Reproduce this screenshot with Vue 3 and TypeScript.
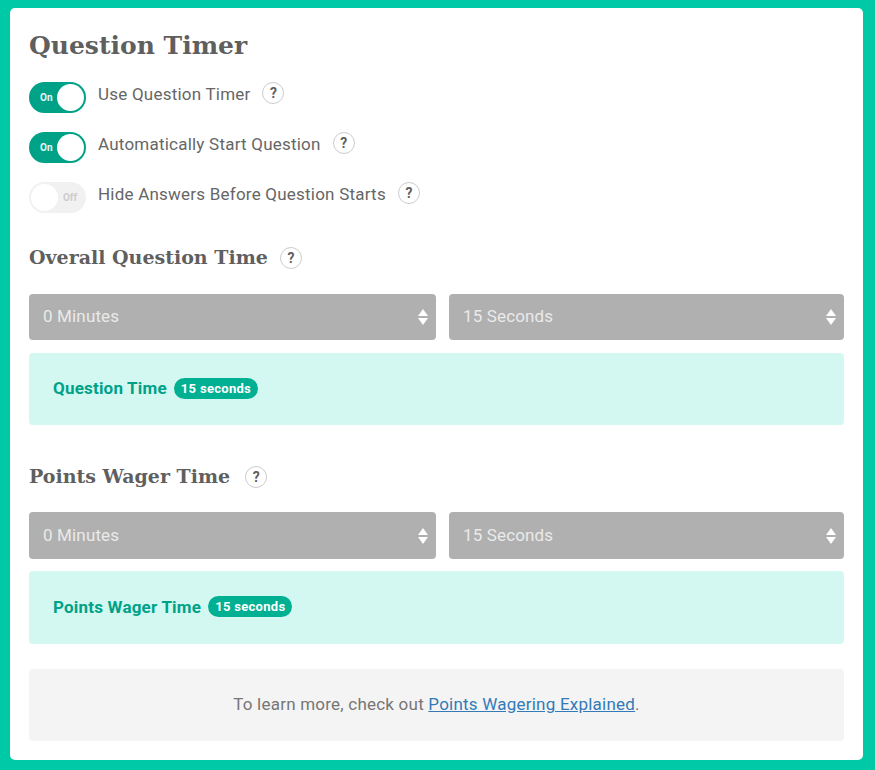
<script setup lang="ts">
import { ref } from 'vue';

const toggles = ref([
  { label: 'Use Question Timer', on: true },
  { label: 'Automatically Start Question', on: true },
  { label: 'Hide Answers Before Question Starts', on: false },
]);

const sections = [
  { title: 'Overall Question Time', label: 'Question Time' },
  { title: 'Points Wager Time', label: 'Points Wager Time' },
];
</script>

<template>
  <div class="page">
    <div class="card">
      <h1>Question Timer</h1>

      <div class="toggles">
        <div v-for="t in toggles" :key="t.label" class="toggle-row">
          <div class="switch" :class="{ on: t.on }">
            <span class="switch-text">{{ t.on ? 'On' : 'Off' }}</span>
            <span class="knob"></span>
          </div>
          <span class="toggle-label">{{ t.label }}</span>
          <span class="help">?</span>
        </div>
      </div>

      <section v-for="s in sections" :key="s.title" class="section">
        <div class="section-head">
          <h2>{{ s.title }}</h2>
          <span class="help">?</span>
        </div>
        <div class="selects">
          <div class="select-wrap">
            <select disabled><option>0 Minutes</option></select>
            <svg class="arrows" width="10" height="16" viewBox="0 0 10 16">
              <path d="M5 0 10 7H0zM0 9h10l-5 7z" fill="#fff" />
            </svg>
          </div>
          <div class="select-wrap">
            <select disabled><option>15 Seconds</option></select>
            <svg class="arrows" width="10" height="16" viewBox="0 0 10 16">
              <path d="M5 0 10 7H0zM0 9h10l-5 7z" fill="#fff" />
            </svg>
          </div>
        </div>
        <div class="info">
          <strong>{{ s.label }}</strong>
          <span class="badge">15 seconds</span>
        </div>
      </section>

      <div class="learn">
        To learn more, check out <a href="#">Points Wagering Explained</a>.
      </div>
    </div>
  </div>
</template>

<style>
body {
  margin: 0;
  background: #00c9a7;
}
</style>

<style scoped>
.page {
  box-sizing: border-box;
  width: 875px;
  height: 770px;
  padding: 8px 12px 10px 10px;
  background: #00c9a7;
  font-family: Roboto, sans-serif;
  color: #666;
}
.card {
  box-sizing: border-box;
  height: 752px;
  padding: 20px 19px 0;
  background: #fff;
  border-radius: 5px;
}
h1 {
  margin: 0 0 18px;
  font-family: 'DejaVu Serif', serif;
  font-size: 25px;
  line-height: 36px;
  font-weight: 700;
  color: #5f5f5f;
}
.toggles {
  display: flex;
  flex-direction: column;
  gap: 19px;
}
.toggle-row {
  display: flex;
  align-items: flex-start;
  height: 31px;
}
.switch {
  position: relative;
  box-sizing: border-box;
  width: 57px;
  height: 31px;
  border-radius: 16px;
  background: #f1f1f1;
  flex: none;
}
.switch.on {
  background: #00a287;
}
.switch-text {
  position: absolute;
  top: 9px;
  right: 9px;
  font-size: 10px;
  line-height: 14px;
  font-weight: 700;
  color: #ccc;
}
.switch.on .switch-text {
  left: 11px;
  right: auto;
  color: #e8f8f5;
}
.knob {
  position: absolute;
  top: 2px;
  left: 2px;
  width: 27px;
  height: 27px;
  border-radius: 50%;
  background: #fff;
}
.switch.on .knob {
  left: 28px;
}
.toggle-label {
  margin-left: 12px;
  font-size: 17px;
  line-height: 25px;
  letter-spacing: 0.22px;
  color: #666;
}
.help {
  box-sizing: border-box;
  display: flex;
  align-items: center;
  justify-content: center;
  width: 22px;
  height: 22px;
  margin-left: 12px;
  border: 1px solid #ccc;
  border-radius: 50%;
  background: #fff;
  font-size: 14px;
  font-weight: 700;
  color: #5f5f5f;
}
.section {
  margin-top: 37px;
}
.toggles + .section {
  margin-top: 30px;
}
.section-head {
  display: flex;
  align-items: center;
  height: 28px;
}
.section-head .help {
  margin-top: 2px;
}
h2 {
  margin: 0;
  font-family: 'DejaVu Serif', serif;
  font-size: 19px;
  line-height: 28px;
  font-weight: 700;
  color: #5f5f5f;
}
.section + .section .help {
  margin-left: 15px;
}
.selects {
  display: grid;
  grid-template-columns: 407px 395px;
  gap: 13px;
  margin-top: 23px;
}
.section + .section .selects {
  margin-top: 22px;
}
.select-wrap {
  position: relative;
}
select {
  display: block;
  width: 100%;
  height: 46px;
  padding: 0 14px 2px;
  border: 0;
  border-radius: 4px;
  background: #b0b0b0;
  appearance: none;
  font-family: Roboto, sans-serif;
  font-size: 17px;
  letter-spacing: 0.15px;
  color: #eaeaea;
  opacity: 1;
}
.section + .section select {
  height: 47px;
}
.arrows {
  position: absolute;
  top: 15px;
  right: 8px;
}
.section + .section .arrows {
  top: 16px;
}
.info {
  display: flex;
  align-items: center;
  box-sizing: border-box;
  height: 72px;
  margin-top: 13px;
  padding: 0 24px 2px 24px;
  border-radius: 4px;
  background: #d3f8f1;
}
.section + .section .info {
  height: 73px;
  margin-top: 12px;
}
.info strong {
  font-size: 17px;
  font-weight: 700;
  letter-spacing: 0.2px;
  color: #00a287;
}
.badge {
  margin-left: 7px;
  padding: 0 7px;
  border-radius: 11px;
  background: #00b093;
  font-size: 13px;
  line-height: 21px;
  font-weight: 700;
  letter-spacing: 0.3px;
  color: #fff;
}
.learn {
  box-sizing: border-box;
  height: 72px;
  margin-top: 25px;
  border-radius: 4px;
  background: #f4f4f4;
  font-size: 17px;
  letter-spacing: 0.22px;
  line-height: 70px;
  text-align: center;
  color: #767676;
}
.learn a {
  color: #337ab7;
  text-decoration: underline;
}
</style>
